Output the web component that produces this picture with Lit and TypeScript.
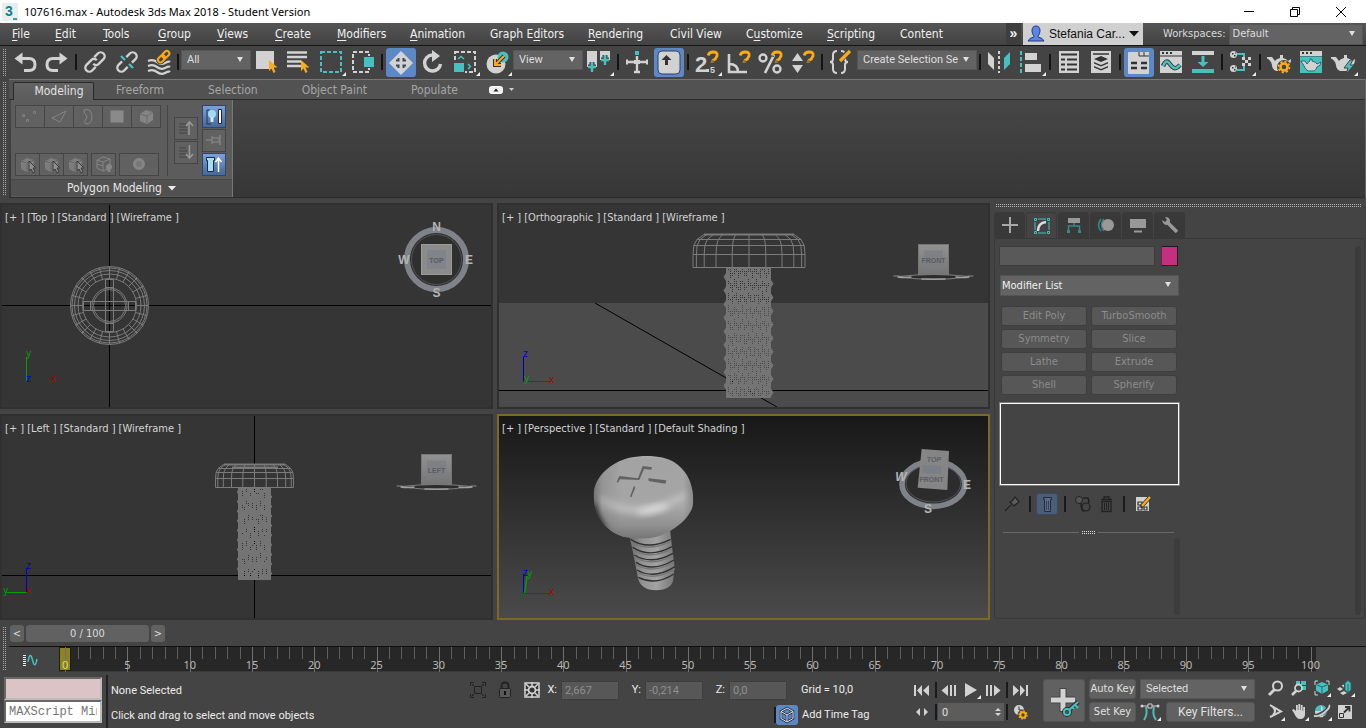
import { LitElement, html, svg, css } from "lit";
import { customElement } from "lit/decorators.js";
import { classMap } from "lit/directives/class-map.js";

const G = "#d2d2d2";
const T = "#47c0c0";
const O = "#fbab18";
const D = "#333333";

const ic = (w: number, h: number, body: unknown) =>
  html`<svg class="ic" width=${w} height=${h} viewBox="0 0 ${w} ${h}" aria-hidden="true">${body}</svg>`;

const magnet = svg`<path d="M17 8q1-4 5-4 5 0 4 4-1 3-4 4.500-1 .5-1 2" fill="none" stroke=${O} stroke-width="2.800"/><path d="M15 7.500l4 1M19 13h4" stroke="#444" stroke-width="1"/>`;
const plus = (x: number, y: number) => svg`<path d="M${x - 4} ${y}h8M${x} ${y - 5}v10" stroke=${T} stroke-width="2.4"/>`;
const teapot = svg`<path d="M4 9h5l3 4q1-2 5-3V7h3v3q4 1 5 3l3-2q0 6-4 7-1 4-4 5h-7q-4-2-4-6Q8 12 4 10.500z" fill=${G}/>`;
const winTop = svg`<path d="M5 3h22v5H5z" fill=${G}/><path d="M7 4h2v2H7zM11 4h2v2h-2zM15 4h2v2h-2z" fill=${D}/>`;
const dashBox = (x: number, y: number, w: number, h: number, c: string) =>
  svg`<rect x=${x} y=${y} width=${w} height=${h} fill="none" stroke=${c} stroke-width="2" stroke-dasharray="4 2"/>`;
const cursor = (x: number, y: number) => svg`<path transform="translate(${x} ${y})" d="M0 0v11l2.500-2.500 2 4.500 2-1-2-4.500h4z" fill=${O}/>`;

const icons: Record<string, unknown> = {
  undo: svg`<path d="M11 10.500h9q6 0 6 6t-6 6h-5" fill="none" stroke=${G} stroke-width="3"/><path d="M5.500 10.500l8-6v12z" fill=${G}/>`,
  redo: svg`<path d="M21 10.500h-9q-6 0-6 6t6 6h5" fill="none" stroke=${G} stroke-width="3"/><path d="M26.500 10.500l-8-6v12z" fill=${G}/>`,
  link: svg`<g transform="rotate(-45 16 14)" fill="none" stroke=${G} stroke-width="2.400"><path d="M13 18H8a4 4 0 0 1 0-8h7a4 4 0 0 1 3.500 4"/><path d="M19 10h5a4 4 0 0 1 0 8h-7a4 4 0 0 1-3.500-4"/></g>`,
  unlink: svg`<g transform="rotate(-45 16 14)" fill="none" stroke=${G} stroke-width="2.400"><path d="M13 18H8a4 4 0 0 1 0-8h5M19 10h5a4 4 0 0 1 0 8h-5"/></g><path d="M10 8l12 12M10 8l3 3M19 17l3 3" stroke=${T} stroke-width="2.400"/><path d="M14 12l4 4" stroke="#444" stroke-width="4"/>`,
  bind: svg`<path d="M5 13q5-2 9 1t8 1 5-1M5 18q5-2 9 1t8 1 5-1M5 23q5-2 9 1t8 1 5-1" fill="none" stroke=${G} stroke-width="2.200"/><g transform="rotate(-45 21 9)" fill="none" stroke="#444" stroke-width="4"><rect x="14" y="6" width="8" height="5" rx="2.500"/><rect x="20" y="6" width="8" height="5" rx="2.500"/></g><g transform="rotate(-45 21 9)" fill="none" stroke=${O} stroke-width="2"><rect x="14" y="6" width="8" height="5" rx="2.500"/><rect x="20" y="6" width="8" height="5" rx="2.500"/></g>`,
  select: svg`<path d="M5 3h18v18H5z" fill=${G}/>${cursor(18, 12)}`,
  byname: svg`<path d="M4 4.500h20M4 9h20M4 13.500h14M4 18h14" stroke=${G} stroke-width="2.600"/>${cursor(18, 12)}`,
  rect: dashBox(6, 4, 20, 20, T),
  window: svg`${dashBox(6, 4, 16, 20, G)}<path d="M16 8h12v12H16z" fill="#444"/><path d="M17 9h10v10H17z" fill=${T}/>`,
  move: svg`<path d="M16 3l12 12-12 12L4 15z" fill=${G}/><path d="M11 12.500h2.500V10M18.500 10v2.500H21M11 17.500h2.500V20M18.500 20v-2.500H21" fill="none" stroke="#3b4657" stroke-width="2"/>`,
  rotate: svg`<path d="M15 7a8 8 0 1 0 8.500 9" fill="none" stroke=${G} stroke-width="3.400"/><path d="M15 2l8 6-8 6z" fill=${G}/>`,
  scale: svg`${dashBox(6, 4, 20, 20, G)}<path d="M4 14h12v12H4z" fill="#444"/><path d="M5 15h10v9H5z" fill=${T}/><path d="M9 11l3-2.500 3 2.500M19 16l2.500 2.500L19 21" fill="none" stroke=${T} stroke-width="1.500"/>`,
  place: svg`<circle cx="15" cy="16" r="9.500" fill=${G}/><circle cx="22" cy="9" r="5.500" fill=${T}/><path d="M23 8l-8 8M14 11v6h6" fill="none" stroke=${D} stroke-width="4"/><path d="M23 8l-8 8M14 11v6h6" fill="none" stroke=${O} stroke-width="2"/>`,
  pivot: svg`<path d="M4 3h10v16H4zM17 3h10v9H17z" fill=${G}/><path d="M5 19h8M9 14v10M18 12h8M22 7v10" stroke="#444" stroke-width="5"/>${plus(9, 19)}${plus(22, 12)}`,
  manip: svg`<path d="M16 8v17M5 14h22M13 24h6" stroke=${G} stroke-width="2.400"/><path d="M14 3h4v4h-4z" fill=${T}/><path d="M5 11.500h2v5H5zM25 11.500h2v5h-2zM13 12h6v4h-6z" fill=${G}/>`,
  keyb: svg`<rect x="5" y="3" width="22" height="23" rx="4" fill=${G} stroke="#35425a"/><path d="M13.500 7l5 5h-3.500v5h-3v-5H8.500z" fill=${D}/>`,
  snap: svg`<text x="4" y="24" class="big" fill=${G}>2</text><path d="M15 21h3v3h-3z" fill=${G}/><text x="19" y="25" class="small" fill=${G}>5</text>${magnet}`,
  angle: svg`<path d="M6 6v18h18M6 16q9 0 9 8" fill="none" stroke=${G} stroke-width="2.600"/>${magnet}`,
  percent: svg`<circle cx="8" cy="10" r="3.500" fill="none" stroke=${G} stroke-width="2.400"/><circle cx="22" cy="21" r="3.500" fill="none" stroke=${G} stroke-width="2.400"/><path d="M19 7L10 25" stroke=${G} stroke-width="2.600"/>${magnet}`,
  spin: svg`<path d="M5 13l5.500-8 5.500 8zM5 17l5.500 8 5.500-8z" fill=${G}/>${magnet}`,
  sets: svg`<path d="M12 3q-4 0-4 4v4q0 3-3 3 3 0 3 3v4q0 4 4 4M16 3q4 0 4 4v4q0 3 3 3-3 0-3 3v4q0 4-4 4" fill="none" stroke=${G} stroke-width="2"/><path d="M14 14l10-11" stroke="#444" stroke-width="5"/><path d="M15 13l10-10" stroke=${O} stroke-width="3.200"/>`,
  mirror: svg`<path d="M5 4l6 6v12l-6-6z" fill=${G}/><path d="M16 3v22" stroke=${G} stroke-width="2" stroke-dasharray="3 2"/><path d="M27 4l-6 6v12l6-6z" fill=${T}/>`,
  align: svg`<path d="M6 3v22" stroke=${T} stroke-width="2" stroke-dasharray="4 2"/><path d="M10 5h12v7H10zM10 16h16v8H10z" fill=${G}/>`,
  layers: svg`<path d="M6 3h20v22H6z" fill=${G}/><path d="M8 6.500h16M8 11.500h4M14 11.500h10M8 16.500h4M14 16.500h10M8 21.500h4M14 21.500h10" stroke=${D} stroke-width="2"/>`,
  layers2: svg`<path d="M6 3h20v22H6z" fill=${G}/><path d="M8 6h16" stroke=${D} stroke-width="1.500"/><path d="M16 8l7 3-7 3-7-3zM9 14l7 3 7-3v1.500l-7 3-7-3zM9 18l7 3 7-3v1.500l-7 3-7-3z" fill=${D}/>`,
  ribbon: svg`<path d="M5 5q0-1 1-1h20v21q0 1-1 1H6q-1 0-1-1z" fill=${G}/><path d="M16 4v4h10M21 4v4" fill="none" stroke=${D}/><path d="M8 15h6M18 15h6M8 20h6M18 20h6" stroke=${D} stroke-width="2.600"/>`,
  curve: svg`<path d="M5 3h22v22H5z" fill=${G}/>${winTop}<path d="M5 8h22" stroke=${D}/><path d="M8 18q3-7 6-3t5 5 6-3" fill="none" stroke=${D} stroke-width="4.500"/><path d="M8 18q3-7 6-3t5 5 6-3" fill="none" stroke=${T} stroke-width="2.600"/>`,
  dope: svg`<path d="M5 3h22v4H5z" fill=${G}/><path d="M5 21h22v4H5z" fill=${T}/><path d="M14.500 8h3v6h4L16 19l-5.500-5h4z" fill=${T}/>`,
  mat: svg`<path d="M12 6h7v5M12 22h7v-4" fill="none" stroke=${T} stroke-width="2"/><circle cx="8.500" cy="6.500" r="3.500" fill=${G}/><circle cx="8.500" cy="20.500" r="3.500" fill=${G}/><path d="M7 5h1.500v1.500H7zM9 7h1.500v1.500H9zM10 4.500h1v1h-1zM7 19h1.500v1.500H7zM9 21h1.500v1.500H9zM10 18.500h1v1h-1z" fill=${D}/><path d="M17 9h3v3h-3zM23 9h3v3h-3zM20 12h3v3h-3zM17 15h3v3h-3zM23 15h3v3h-3z" fill=${G}/>`,
  rsetup: svg`${teapot}<circle cx="21" cy="19" r="7" fill="#444"/><circle cx="21" cy="19" r="3.500" fill="none" stroke=${O} stroke-width="2.600"/><circle cx="21" cy="19" r="5.400" fill="none" stroke=${O} stroke-width="1.800" stroke-dasharray="2.200 2"/>`,
  rframe: svg`${winTop}<path d="M5 8.500h22V25H5z" fill=${T}/><path d="M6 13h4l2 3q1-2 3-3v-2h2v2q4 1 5 3l4-2q0 4-4 5-1 3-3 4h-6q-3-2-4-5-1-3-3-4z" fill=${G} stroke="#2b6d6e"/>`,
  render: svg`${teapot}<path d="M23 12l-6 8h4l-2 6 8-9h-4l3-5z" fill=${T} stroke="#444"/>`,
};

type Tool = [string, string, boolean?, boolean?];
const bar: (Tool | "|" | { label: string; value: string; cls: string })[] = [
  ["undo", "Undo"], ["redo", "Redo"], "|",
  ["link", "Select and Link"], ["unlink", "Unlink Selection"], ["bind", "Bind to Space Warp"], "|",
  { label: "Selection filter", value: "All", cls: "w70" },
  ["select", "Select Object"], ["byname", "Select by Name"], ["rect", "Rectangular Region", false, true], ["window", "Window/Crossing"], "|",
  ["move", "Select and Move", true], ["rotate", "Select and Rotate"], ["scale", "Select and Scale", false, true], ["place", "Select and Place", false, true],
  { label: "Reference coordinate system", value: "View", cls: "w70" },
  ["pivot", "Use Pivot Point Center", false, true], "|",
  ["manip", "Select and Manipulate"], ["keyb", "Keyboard Shortcut Override", true], "|",
  ["snap", "Snaps Toggle", false, true], ["angle", "Angle Snap"], ["percent", "Percent Snap"], ["spin", "Spinner Snap"], "|",
  ["sets", "Edit Named Selection Sets"],
  { label: "Named selection sets", value: "Create Selection Se", cls: "w120" }, "|",
  ["mirror", "Mirror"], ["align", "Align", false, true], "|",
  ["layers", "Scene Explorer"], ["layers2", "Layer Explorer"], "|",
  ["ribbon", "Toggle Ribbon", true], ["curve", "Curve Editor"], ["dope", "Schematic View"], "|",
  ["mat", "Material Editor", false, true], "|",
  ["rsetup", "Render Setup"], ["rframe", "Rendered Frame Window"], ["render", "Render Production", false, true],
];

const menus: [string, number][] = [
  ["File", 0], ["Edit", 0], ["Tools", 0], ["Group", 0], ["Views", 0], ["Create", 0], ["Modifiers", 0], ["Animation", 0],
  ["Graph Editors", 7], ["Rendering", 0], ["Civil View", -1], ["Customize", 1], ["Scripting", 0], ["Content", -1],
];

const head = (cx: number, hw: number, ys: number[], fs: number[]) => {
  const k = [1, 1, 0.985, 0.93, 0.8];
  const rows = ys.map((y, i) => `M${cx - hw * k[i]} ${y}H${cx + hw * k[i]}`).join("");
  const cols = fs
    .flatMap((f) => (f ? [-f, f] : [0]))
    .map((f) => "M" + ys.map((y, i) => `${(cx + hw * f * k[i]).toFixed(1)} ${y}`).join("L"))
    .join("");
  return svg`<path d=${rows + cols} fill="none" stroke="#7b7b7b"/>`;
};

const shank = (x: number, y: number, w: number, h: number, edge: number, density: number) => {
  let d = `M${x} ${y}h${w}v${h}h${-w}z`;
  for (let j = 1; j < h - 1; j += 2) {
    for (let i = edge; i < w - edge; i += 2) {
      const wave = Math.sin(j * 0.47 + Math.sin(i * 0.9) * 1.4) + Math.sin(i * 1.7 + j * 0.13) * 0.7;
      if (wave > density) d += `M${x + i} ${y + j}h1v1h-1z`;
    }
  }
  return svg`<path d=${d} fill="#747474" fill-rule="evenodd"/>`;
};

const bumps = (xl: number, xr: number, y0: number, y1: number, step: number, r: number) => {
  let d = "";
  for (let y = y0; y < y1; y += step) d += `M${xl} ${y - r * 1.6}l${-r} ${r * 1.6}l${r} ${r * 1.6}zM${xr} ${y + step / 2 - r * 1.6}l${r} ${r * 1.6}l${-r} ${r * 1.6}z`;
  return svg`<path d=${d} fill="#747474"/>`;
};

const topScrew = () => {
  const cx = 109.5, cy = 305.5;
  let d = "";
  for (let a = 0; a < 24; a++) {
    const t = (a * Math.PI) / 12;
    d += `M${(cx + 27 * Math.cos(t)).toFixed(1)} ${(cy + 27 * Math.sin(t)).toFixed(1)}L${(cx + 39 * Math.cos(t)).toFixed(1)} ${(cy + 39 * Math.sin(t)).toFixed(1)}`;
  }
  return svg`<g fill="none" stroke="#7b7b7b">
    ${[39, 37.5, 35, 31.5, 27, 17.5, 16].map((r) => svg`<circle cx=${cx} cy=${cy} r=${r}/>`)}
    <path d=${d}/>
    <path d="M105.500 279V332M113.500 279V332M105.500 279.500h8M105.500 331.500h8M105.500 287.500h8M105.500 323.500h8M83 301.500H136M83 310.500H136M83.500 301.500v9M135.500 301.500v9M90.500 301.500v9M128.500 301.500v9"/>
  </g>`;
};

const flatCube = (x: number, label: string, y: number) => svg`
  <path d="M${x - 40} ${y + 31.500}h6M${x + 34} ${y + 31.500}h6" stroke="#8a8a8a"/>
  <path d="M${x - 35} ${y + 32}Q${x} ${y + 28} ${x + 35} ${y + 32}Q${x} ${y + 38} ${x - 35} ${y + 32}z" fill="#2b2b2b" stroke="#7c7e80"/>
  <path d="M${x - 36} ${y + 32.500}q8 1 14 0M${x + 36} ${y + 32.500}q-8 1-14 0" fill="none" stroke="#a0a0a0" stroke-width="1.500"/>
  <path d="M${x - 12} ${y + 34.500}h24" stroke="#c4c4c4"/>
  <rect x=${x - 15} y=${y} width="30" height="30" fill="url(#cube)" stroke="#777"/>
  <rect x=${x - 9.500} y=${y + 6} width="19" height="18" fill="#7b7d82" opacity=".7"/>
  <text x=${x} y=${y + 18} class="face">${label}</text>`;

const defs = svg`<defs>
  <linearGradient id="cube" x1="0" y1="0" x2="0" y2="1"><stop offset="0" stop-color="#929292"/><stop offset="1" stop-color="#757575"/></linearGradient>
  <linearGradient id="hd" x1="0" y1="0" x2="0" y2="1"><stop offset="0" stop-color="#b2b2b2"/><stop offset=".08" stop-color="#a3a3a3"/><stop offset=".6" stop-color="#a6a6a6"/><stop offset=".8" stop-color="#909090"/><stop offset="1" stop-color="#6c6c6c"/></linearGradient>
  <linearGradient id="hs" x1="0" y1="0" x2="1" y2="0"><stop offset="0" stop-color="#000" stop-opacity=".4"/><stop offset=".12" stop-color="#000" stop-opacity=".1"/><stop offset=".3" stop-color="#000" stop-opacity="0"/><stop offset=".88" stop-color="#000" stop-opacity="0"/><stop offset="1" stop-color="#000" stop-opacity=".2"/></linearGradient>
  <linearGradient id="sk" x1="0" y1="0" x2="1" y2="0"><stop offset="0" stop-color="#6e6e6e"/><stop offset=".3" stop-color="#959595"/><stop offset=".6" stop-color="#a2a2a2"/><stop offset="1" stop-color="#767676"/></linearGradient>
  <filter id="soft" x="-30%" y="-60%" width="160%" height="220%"><feGaussianBlur stdDeviation="9"/></filter>
  <clipPath id="headclip"><path d="M293 255C293 200 345 157 400 143C455 133 505 138 535 157C570 180 583 212 587 232C593 255 594 285 586 300C570 332 545 350 515 367C480 388 430 390 380 380C330 364 293 320 293 255z"/></clipPath>
</defs>`;

const scenes: Record<string, unknown> = {
  top: svg`<path d="M109.500 205V407M2 305.500H491" stroke="#000"/>${topScrew()}
    <circle cx="436.500" cy="259.500" r="29.500" fill="#2f2f2f" stroke="#7f8389" stroke-width="6"/><circle cx="436.500" cy="259.500" r="25" fill="none" stroke="#50545a"/>
    <rect x="421.500" y="244.500" width="30" height="30" fill="#8b8b8b" stroke="#9a9a9a"/><rect x="427" y="250" width="19" height="19" fill="#808389"/>
    <text x="436.500" y="263" class="face">TOP</text>
    <text x="436.500" y="231" class="dir">N</text><text x="436.500" y="297" class="dir">S</text><text x="404" y="264" class="dir">W</text><text x="469" y="264" class="dir">E</text>
    <path d="M26.500 357v24.500" stroke="#00a000"/><path d="M31 381.500h22" stroke="#b40000"/>
    <text x="26" y="357" class="ax g">y</text><text x="26" y="382" class="ax b">z</text><text x="51" y="382" class="ax r">x</text>`,
  ortho: svg`<path d="M499 303h489v104H499z" fill="#4b4b4b"/><path d="M595 303L777 407M499 390.500H988" stroke="#000"/>
    ${shank(726, 268, 45, 130, 2, 0.1)}${bumps(726, 771, 277, 392, 13.6, 2.5)}
    ${head(749, 56, [267.5, 254.5, 245.5, 239.5, 234.5], [0, 0.3, 0.59, 0.8, 0.94, 1])}<path d="M704 234.500h90" stroke="#7b7b7b" stroke-width="2"/>
    ${flatCube(933.5, "FRONT", 244.5)}
    <path d="M523.500 357v24.500" stroke="#0000b0"/><path d="M528 381.500h22" stroke="#b40000"/>
    <text x="523" y="357" class="ax b">z</text><text x="524" y="382" class="ax g">y</text><text x="549" y="383" class="ax r">x</text>`,
  left: svg`<path d="M254.500 416V618M2 575.500H491" stroke="#000"/>
    ${shank(238, 488, 33, 92, 4, 0.75)}${bumps(238, 271, 492, 572, 9.6, 1.2)}
    ${head(254.5, 39, [487.5, 478.5, 472.5, 468.5, 464.5], [0, 0.3, 0.59, 0.8, 0.94, 1])}<path d="M224 464.500h61M232 467.500h46" stroke="#7b7b7b" stroke-width="2"/>
    ${flatCube(436.5, "LEFT", 454.5)}
    <path d="M26.500 568v24.500" stroke="#0000d0"/><path d="M7 592.500h20" stroke="#00a000"/>
    <text x="26" y="569" class="ax b">z</text><text x="3" y="594" class="ax g">y</text><text x="26" y="594" class="ax r">x</text>`,
  persp: svg`<g transform="translate(496 410) scale(.33333)">
    <path d="M402 375L522 355Q526 400 536 470L532 508Q528 540 480 541Q434 540 426 505Q418 460 402 385z" fill="url(#sk)"/>
    <path d="M404 388Q455 422 524 388M410 412Q462 446 528 410M415 435Q466 466 531 430M420 457Q470 488 534 450M423 480Q474 510 537 470M427 502Q478 528 534 492" fill="none" stroke="#303030" stroke-width="4"/>
    <path d="M404 394Q455 428 524 394M410 418Q462 452 528 416M415 441Q466 472 531 436M420 463Q470 494 534 456M423 486Q474 516 537 476" fill="none" stroke="#777" stroke-width="4"/>
    <g clip-path="url(#headclip)">
      <path d="M280 130H600V400H280z" fill="url(#hd)"/>
      <path d="M310 265Q420 340 570 255" fill="none" stroke="#bdbdbd" stroke-width="22" filter="url(#soft)"/>
      <ellipse cx="470" cy="298" rx="50" ry="10" transform="rotate(-12 470 298)" fill="#dcdcdc" filter="url(#soft)"/>
      <path d="M280 130H600V400H280z" fill="url(#hs)"/>
      <path d="M292 270Q305 325 335 362Q290 350 285 300z" fill="#000" filter="url(#soft)"/>
    </g>
    <path d="M440 168L468 172L466 179L444 177L430 210L372 208L366 218L362 216L370 198L426 205zM457 205L511 211L508 221L458 213zM414 227L418 233L406 262L402 260z" fill="#626262"/>
    <ellipse cx="1312" cy="222" rx="94" ry="67" fill="#2c2c2c" stroke="#7f8389" stroke-width="17"/><ellipse cx="1312" cy="220" rx="82" ry="56" fill="none" stroke="#50545a" stroke-width="3"/>
    <path d="M1277 117L1359 123L1354 240L1265 233z" fill="#858585"/><path d="M1280 165L1336 168L1334 192L1279 188z" fill="#7a7e87"/></g>
    <text x="934" y="462" class="face it">TOP</text><text x="931.500" y="482" class="face">FRONT</text>
    <text x="901" y="481" class="dir it">W</text><text x="967" y="489" class="dir">E</text><text x="928" y="513" class="dir">S</text>
    <path d="M523.500 574v19" stroke="#0000d0"/><path d="M524.500 593L527 576" stroke="#00a000" stroke-width="1.500"/><path d="M524 593.500h26" stroke="#b40000"/>
    <text x="523" y="576" class="ax b">z</text><text x="527" y="577" class="ax g">y</text><text x="549" y="595" class="ax r">x</text>`,
};

const views: { id: string; box: string; tags: string[] }[] = [
  { id: "top", box: "2 205 489 202", tags: ["+", "Top ", "Standard ", "Wireframe "] },
  { id: "ortho", box: "499 205 489 202", tags: ["+", "Orthographic ", "Standard ", "Wireframe "] },
  { id: "left", box: "2 416 489 202", tags: ["+", "Left ", "Standard ", "Wireframe "] },
  { id: "persp", box: "499 416 489 202", tags: ["+", "Perspective ", "Standard ", "Default Shading "] },
];

const box3 = svg`<path d="M4 7l6-3 7 2v8l-7 4-6-3z" fill="#7d7d7d"/><path d="M4 7l6 2 7-3M10 9v8" fill="none" stroke="#666"/>`;
const arrowCur = svg`<path d="M12 7v10l2-2 2 4 2-1-2-4h3z" fill="#8f8f8f" stroke="#3a3a3a"/>`;

@customElement("app-root")
export class AppRoot extends LitElement {
  static styles = css`
    :host { display: grid; grid-template-rows: 23px 23px 33px 119px minmax(0, 1fr) 108px; height: 100vh; overflow: hidden; background: #444; color: #e6e6e6; font: 11px/14px "DejaVu Sans Condensed", "Noto Sans", sans-serif; }
    * { box-sizing: border-box; }
    button, input, select { font: inherit; color: inherit; margin: 0; padding: 0; border: 0; background: none; border-radius: 0; outline: 0; }
    button { display: flex; align-items: center; justify-content: center; flex: none; white-space: nowrap; }
    a { color: inherit; text-decoration: none; }
    svg { display: block; flex: none; }
    .grip { width: 3px; margin-left: 3px; background: linear-gradient(transparent 50%, #444 50%) 0 0 / 2px 2px, linear-gradient(90deg, #a8a8a8 50%, transparent 50%) 0 0 / 2px 2px; }
    .sep { width: 2px; background: #1a1a1a; flex: none; }

    .title { display: flex; align-items: center; background: #fff; color: #000; font: 11px/22px "Noto Sans", sans-serif; padding: 0 5px 0 2px; gap: 5px; }
    .title h1 { font: inherit; margin: 0; flex: 1; }
    .title button { width: 41px; height: 22px; }

    .menubar { display: flex; border-bottom: 1px solid #151515; background: linear-gradient(#555, #424242); }
    .menus { display: grid; grid-template-columns: 43px 48px 55px 59px 58px 62px 73px 80px 98px 82px 76px 81px 73px 1fr; flex: 1; padding-left: 12px; font-size: 12px; line-height: 22px; color: #f0f0f0; }
    .menus a { white-space: pre; }
    .menus u { text-underline-offset: 2px; }
    .more { width: 15px; margin-right: 2px; background: #3e3e3e; font: bold 14px/18px "Liberation Sans", sans-serif; color: #eee; padding-bottom: 3px; }
    .user { width: 120px; background: #d0d0d0; color: #111; font: 12px/22px "Liberation Sans", sans-serif; gap: 4px; }
    .ws { display: flex; align-items: center; width: 223px; padding: 0 3px 0 20px; gap: 3px; color: #d8d8d8; }
    .ws .drop { flex: 1; height: 21px; }
    .ws .drop select { padding-left: 3px; }

    .drop { position: relative; display: block; height: 20px; background: #636363; border: 1px solid #555; color: #dedede; flex: none; }
    .drop select { appearance: none; width: 100%; height: 100%; padding: 0 4px 0 5px; display: block; }
    .drop::after { content: ""; position: absolute; right: 7px; top: 6px; border: 3px solid transparent; border-top: 5px solid #e0e0e0; border-bottom: 0; pointer-events: none; }
    .w70 { width: 70px; }
    .w120 { width: 120px; }

    .toolbar { display: flex; align-items: flex-start; padding-top: 2px; overflow: hidden; }
    .toolbar .grip { height: 27px; margin-right: 3px; margin-top: 1px; flex: none; }
    .toolbar .drop { margin-top: 2px; font-family: Roboto, sans-serif; }
    .tool { width: 32px; height: 29px; position: relative; }
    .tool.on::before { content: ""; position: absolute; inset: 0 1px; background: #5c88c5; border-radius: 3px; }
    .tool svg { position: relative; }
    .sep6 { width: 6px; height: 16px; margin-top: 6px; border-left: 2px solid #444; border-right: 2px solid #444; background: #141414; flex: none; }
    .big { font: bold 22px "Liberation Sans", sans-serif; }
    .small { font: bold 9px "Liberation Sans", sans-serif; }

    .ribbon { display: grid; grid-template-columns: 9px 1fr; background: #444; }
    .ribbon .grip { margin-top: 3px; margin-bottom: 2px; }
    .rib { border-top: 1px solid #777; border-right: 1px solid #666; display: flex; flex-direction: column; }
    .tabs { display: flex; align-items: flex-end; height: 20px; background: #525252; border-bottom: 1px solid #2a2a2a; padding-left: 4px; color: #a6a6a6; font-size: 12px; line-height: 17px; }
    .tabs button { height: 18px; padding: 0 22px; }
    .tabs .act { color: #e2e2e2; width: 81px; height: 18px; padding: 0 9px 1px 20px; background: linear-gradient(#646464, #5c5c5c); border: 1px solid #2a2a2a; border-bottom: 0; margin-bottom: -1px; border-radius: 2px 2px 0 0; }
    .tabs .mini { padding: 0 7px 1px 9px; gap: 6px; }
    .body { flex: 1; display: flex; background: linear-gradient(#464646, #373737); border-bottom: 1px solid #2b2b2b; padding-left: 2px; }
    .panel { width: 222px; background: #5c5c5c; border-right: 1px solid #777; display: flex; flex-direction: column; justify-content: space-between; }
    .pbody { display: flex; padding: 5px 6px 0 4px; }
    .pleft { width: 153px; height: 71px; display: flex; flex-direction: column; justify-content: space-between; border-right: 1px solid #454545; }
    .row { display: flex; }
    .rb { border: 1px solid #454545; height: 23px; background: #616161; margin-right: -1px; }
    .r29 { width: 30px; }
    .r24 { width: 25px; }
    .r40 { width: 40px; }
    .gap5 { margin-left: 4px; }
    .col { display: flex; flex-direction: column; gap: 1px; margin-left: 6px; }
    .col + .col { margin-left: 4px; }
    .col .rb { width: 24px; margin: 0; }
    .mid { justify-content: center; }
    .rb.blue { background: linear-gradient(#7ba1da, #48679a); border-color: #2f4569; }
    .ptitle { background: #515151; border-top: 1px solid #484848; height: 17px; text-align: center; font-size: 12px; line-height: 15px; gap: 6px; width: 100%; margin-bottom: 1px; }

    .main { display: grid; grid-template-columns: minmax(0, 1fr) minmax(0, 1fr) 372px; column-gap: 4px; padding-top: 5px; }
    .views { display: grid; grid-column: 1 / 3; grid-template: 1fr 1fr / 1fr 1fr; gap: 5px 4px; min-height: 0; }
    .view { position: relative; border: 2px solid #303030; background: #353535; min-width: 0; min-height: 0; overflow: hidden; }
    .view.persp { border-color: #7d6829; background: linear-gradient(#181818, #4a4a4a); }
    .view > svg { width: 100%; height: 100%; }
    .labels { position: absolute; left: 3px; top: 6px; display: flex; gap: 3px; color: #d4d4d4; }
    .labels button { white-space: pre; }
    .face { font: bold 7px "Liberation Sans", sans-serif; fill: #5a5d63; text-anchor: middle; }
    .dir { font: bold 12px "Liberation Sans", sans-serif; fill: #b4b4b4; text-anchor: middle; }
    .it { font-style: italic; }
    .ax { font: 10px "DejaVu Sans Condensed", sans-serif; }
    .g { fill: #00a000; }
    .b { fill: #0000d8; }
    .r { fill: #b40000; }

    .cmd { display: flex; flex-direction: column; padding-top: 1px; }
    .hgrip { height: 3px; margin: 0 4px 5px 2px; background: linear-gradient(transparent 50%, #444 50%) 0 0 / 2px 2px, linear-gradient(90deg, #b4b4b4 50%, transparent 50%) 0 0 / 2px 2px; }
    .ctabs { display: flex; gap: 1px; }
    .ctabs button { width: 31px; height: 26px; background: #393939; border-radius: 4px 4px 0 0; }
    .ctabs .act { background: #444; border: 1px solid #3a3a3a; border-bottom: 0; height: 27px; margin-bottom: -1px; }
    .cbox { flex: 1; display: flex; border: 1px solid #393939; border-radius: 3px; padding: 7px 3px 3px 4px; justify-content: space-between; margin-bottom: 1px; margin-right: 1px; }
    .inner { width: 181px; display: flex; flex-direction: column; }
    .name { display: flex; gap: 6px; }
    .name input { width: 156px; height: 20px; background: #595959; border: 1px solid #3d3d3d; padding: 0 4px; }
    .swatch { width: 17px; height: 20px; background: #c4307f; border: 1px solid #1a1a1a; border-left-color: #6b2a4c; }
    .inner .drop { margin: 9px 1px 0; height: 21px; }
    .inner .drop select { padding-left: 1px; color: #f0f0f0; }
    .mods { display: grid; grid-template-columns: 86px 86px; gap: 3px 4px; margin: 10px 0 7px 2px; }
    .mods button { height: 20px; background: #575757; border: 1px solid #3f3f3f; border-radius: 3px; color: #8c8c8c; }
    .stack { height: 84px; border: 2px solid #fff; outline: 1px solid #7c7c7c; outline-offset: -1px; }
    .stools { display: flex; align-items: center; height: 36px; padding-left: 2px; }
    .stools button { width: 22px; height: 22px; }
    .stools .on { background: #4b5d79; border-radius: 3px; border: 1px solid #3a4a62; margin: 0 0 0 5px; }
    .stools .sep { height: 16px; margin-left: 6px; }
    .stools .uniq { margin-left: 5px; }
    .stools .trash { margin-left: 2px; }
    .stools .conf { margin-left: 6px; }
    .split { display: flex; align-items: center; gap: 3px; margin: 9px 6px 4px 4px; }
    .split i { flex: 1; height: 1px; background: #6a6a6a; }
    .split b { width: 13px; height: 3px; background: linear-gradient(transparent 50%, #444 50%) 0 0 / 2px 2px, linear-gradient(90deg, #e0e0e0 50%, transparent 50%) 0 0 / 2px 2px; }
    .sb { width: 6px; background: #3c3c3c; border-radius: 3px; }
    .in2 { flex: 1; display: flex; justify-content: flex-end; }

    .foot { display: grid; grid-template-rows: 52px 1fr; }
    .time { display: grid; grid-template-columns: 9px 1fr; }
    .time .grip { margin-top: 7px; margin-bottom: 2px; }
    .slider { display: flex; height: 26px; padding: 5px 0 0 1px; gap: 2px; border-bottom: 1px solid #444; }
    .slider button { height: 17px; width: 14px; background: #616161; border-radius: 3px; color: #dcdcdc; }
    .slider .thumb { width: 123px; }
    .trackrow { display: flex; height: 26px; border-top: 1px solid #101010; }
    .mini-curve { width: 42px; height: 25px; margin-right: 8px; }
    .track { flex: 1; display: flex; background: #272727; margin-right: 50px; border-bottom: 1px solid #3a3a3a; }
    .frame { flex: 1; min-width: 0; position: relative; display: flex; justify-content: center; align-items: flex-end; font: 11px/13px "Noto Sans", sans-serif; color: #b8b8b8; white-space: nowrap; }
    .frame::before { content: ""; position: absolute; top: 0; left: 50%; width: 1px; height: 12px; background: #5e5e5e; }
    .frame.five::before { height: 25px; background: #707070; }
    .frame span { position: relative; flex: none; }
    .frame.now { background: #8b8420; color: #e2dc50; outline: 1px solid #1c1c10; outline-offset: -1px; }

    .status { display: flex; color: #ececec; font-family: Roboto, sans-serif; }
    .listen { width: 98px; margin-left: 4px; padding-top: 5px; }
    .listen input { display: block; width: 98px; height: 23px; border: 2px inset #bbb; }
    .pink { background: #dcc3c5; }
    .mx { background: #fff; color: #777; font: 12px "Liberation Mono", monospace; padding: 0 3px; }
    .vsep { width: 2px; margin: 3px 3px 2px 4px; background: #222; }
    .msg { flex: 1; padding-top: 8px; line-height: 22px; }
    .msg p { margin: 0 0 3px; }
    .coord { width: 446px; padding-top: 7px; display: grid; grid-template-rows: 22px 20px; row-gap: 4px; align-items: center; }
    .coord .row { align-items: center; }
    .coord .row button { width: 27px; height: 22px; }
    .coord label { display: flex; align-items: center; width: 84px; gap: 4px; }
    .coord label span { width: 12px; text-align: right; white-space: nowrap; }
    .coord input { width: 58px; height: 19px; background: #575757; border: 1px solid #3e3e3e; color: #8f8f8f; padding: 0 3px; }
    .coord .grid-size { margin-left: 4px; }
    .tag { padding-left: 310px; gap: 4px; }
    .coord .tag button { width: 22px; height: 20px; background: #5c88c5; border-radius: 3px; }
    .tag .sep { height: 16px; margin-right: -4px; }
    .play { width: 128px; padding: 7px 0 0 1px; display: grid; grid-template-rows: 21px 20px; row-gap: 2px; }
    .play .row { align-items: center; }
    .play button { width: 22px; height: 20px; }
    .play .sep { height: 16px; margin: 0 1px 0 2px; }
    .play input { width: 66px; height: 18px; background: #5c5c5c; color: #e0e0e0; padding: 0 4px; display: block; }
    .spinbox { position: relative; display: block; }
    .spinbox svg { position: absolute; right: 3px; top: 4px; }
    .keys { display: grid; grid-template-columns: 42px 47px 115px; column-gap: 4px; padding: 7px 6px 0 5px; align-items: start; }
    .keys button { background: #616161; border-radius: 3px; height: 20px; border: 1px solid #555; color: #e0e0e0; }
    .keys .bigkey { height: 43px; }
    .stackc { display: flex; flex-direction: column; gap: 3px; }
    .stackc > button { font-family: "DejaVu Sans Condensed", sans-serif; }
    .keys .bare { width: 26px; background: none; border: 0; justify-content: flex-start; }
    .keys .kf { flex: 1; font-size: 12px; }
    .nav { display: grid; grid-template-columns: repeat(4, 23px); grid-template-rows: 23px 22px; width: 105px; padding: 6px 0 0 3px; }
    .nav button { height: 22px; }
  `;

  private drop(label: string, value: string, cls = "") {
    return html`<label class="drop ${cls}"><select aria-label=${label}><option>${value}</option></select></label>`;
  }

  private tool(item: (typeof bar)[number]) {
    if (item === "|") return html`<span class="sep6"></span>`;
    if (!Array.isArray(item)) return this.drop(item.label, item.value, item.cls);
    const [id, label, on, corner] = item;
    return html`<button class=${classMap({ tool: true, on: !!on })} aria-label=${label}>
      ${ic(32, 29, svg`${icons[id]}${corner ? svg`<path d="M31 24v4h-4z" fill="#eee"/>` : null}`)}
    </button>`;
  }

  private menu([text, k]: [string, number]) {
    return html`<a href="#">${k < 0 ? text : html`${text.slice(0, k)}<u>${text[k]}</u>${text.slice(k + 1)}`}</a>`;
  }

  render() {
    return html`
      <header class="title">
        ${ic(17, 18, svg`<rect width="16" height="18" fill="#e8eeee"/><text x="3" y="13" font-family="Liberation Sans" font-weight="bold" font-size="14" fill="#0b8389">3</text><path d="M11 15h4v2h-4z" fill="#2aa5aa"/>`)}
        <h1>107616.max - Autodesk 3ds Max 2018 - Student Version</h1>
        <button aria-label="Minimize">${ic(12, 12, svg`<path d="M1 5.500h10" stroke="#000"/>`)}</button>
        <button aria-label="Restore">${ic(12, 12, svg`<path d="M1.500 3.500h7v7h-7zM3.500 3.500v-2h7v7h-2" fill="none" stroke="#000"/>`)}</button>
        <button aria-label="Close">${ic(12, 12, svg`<path d="M1 1l10 10M11 1L1 11" stroke="#000"/>`)}</button>
      </header>

      <div class="menubar">
        <nav class="menus">${menus.map((m) => this.menu(m))}</nav>
        <button class="more" aria-label="More menus">»</button>
        <button class="user">
          ${ic(18, 18, svg`<path d="M9 1q4 0 4 5 0 3-2 5v1q5 1 6 4H1q1-3 6-4v-1Q5 9 5 6q0-5 4-5z" fill="#5b86e8" stroke="#223a7c"/>`)}
          <span>Stefania Car...</span>
          ${ic(10, 6, svg`<path d="M0 0h10L5 5.500z" fill="#111"/>`)}
        </button>
        <div class="ws"><span>Workspaces:</span>${this.drop("Workspace", "Default")}</div>
      </div>

      <div class="toolbar"><span class="grip"></span>${bar.map((b) => this.tool(b))}</div>

      <section class="ribbon">
        <span class="grip"></span>
        <div class="rib">
          <div class="tabs">
            <button class="act">Modeling</button><button>Freeform</button><button>Selection</button><button>Object Paint</button><button>Populate</button>
            <button class="mini" aria-label="Minimize ribbon">
              ${ic(14, 8, svg`<rect x=".5" y=".5" width="13" height="7" rx="2" fill="#eee" stroke="#fff"/><path d="M4.500 5.500h5L7 2.500z" fill="#222"/>`)}
              ${ic(6, 4, svg`<path d="M0 0h5L2.500 3z" fill="#ccc"/>`)}
            </button>
          </div>
          <div class="body">
            <div class="panel">
              <div class="pbody">
                <div class="pleft">
                  <div class="row">
                    <button class="rb r29" aria-label="Vertex">${ic(22, 21, svg`<path d="M3.500 8.500h2v2h-2zM7.500 13.500h2v2h-2zM14.500 5.500h2v2h-2z" fill="none" stroke="#808080"/>`)}</button>
                    <button class="rb r29" aria-label="Edge">${ic(22, 21, svg`<path d="M4 12l14-7-6 11z" fill="none" stroke="#858585"/>`)}</button>
                    <button class="rb r29" aria-label="Border">${ic(22, 21, svg`<path d="M7 4q8-2 8 7 0 7-6 7-3-2 0-5 2-2 0-4-3-3-2-5z" fill="none" stroke="#858585"/>`)}</button>
                    <button class="rb r29" aria-label="Polygon">${ic(22, 21, svg`<path d="M4.500 4.500h13v12h-13z" fill="#8a8a8a" stroke="#777"/>`)}</button>
                    <button class="rb r29" aria-label="Element">${ic(22, 21, svg`<path d="M5 8l6-4 7 2v8l-6 4-7-3z" fill="#858585"/><path d="M5 8l7 2 6-4M12 10v8" fill="none" stroke="#6c6c6c"/>`)}</button>
                  </div>
                  <div class="row">
                    ${["Preview off", "Preview subobject", "Preview multi"].map((n) => html`<button class="rb r24" aria-label=${n}>${ic(22, 21, svg`${box3}${arrowCur}`)}</button>`)}
                    <button class="rb r24 gap5" aria-label="Constraints">${ic(22, 21, svg`<path d="M4 6l6-3 7 2v9l-7 3-6-3zM4 6l6 2 7-3M10 8v9M4 10l6 2" fill="none" stroke="#858585"/><circle cx="16" cy="13" r="3" fill="#858585"/><path d="M14.500 15h3v3h-3z" fill="#858585"/>`)}</button>
                    <button class="rb r40 gap5" aria-label="Soft selection">${ic(22, 21, svg`<circle cx="11" cy="10" r="4.500" fill="#777" stroke="#858585" stroke-width="3"/>`)}</button>
                  </div>
                </div>
                <div class="col mid">
                  <button class="rb" aria-label="Previous modifier">${ic(22, 21, svg`<path d="M4 6h7M4 9h8M4 12h8M4 15h8" stroke="#454545"/><path d="M14 17V5M11 8l3.500-4L18 8" fill="none" stroke="#999" stroke-width="1.500"/>`)}</button>
                  <button class="rb" aria-label="Next modifier">${ic(22, 21, svg`<path d="M4 6h7M4 9h8M4 12h8M4 15h8" stroke="#454545"/><path d="M14.500 3v12M11 12l3.500 4 3.500-4" fill="none" stroke="#999" stroke-width="1.500"/>`)}</button>
                </div>
                <div class="col">
                  <button class="rb blue" aria-label="Show end result">${ic(22, 21, svg`<path d="M4 4v14h4M4 4h3" fill="none" stroke="#24344f"/><circle cx="9" cy="8" r="4" fill="#a5d8f5"/><path d="M7.500 11h3v5h-3z" fill="#cdeaf8"/><path d="M15.500 3.500h3v14h-3z" fill="#fff" stroke="#222"/>`)}</button>
                  <button class="rb" aria-label="Pin stack">${ic(22, 21, svg`<path d="M3 10h6M9 6v8M9 8h7v4H9M17 5v10" fill="none" stroke="#808080" stroke-width="1.500"/>`)}</button>
                  <button class="rb blue" aria-label="Collapse">${ic(22, 21, svg`<path d="M3.500 3.500h8v3h-1v11h-6v-11h-1z" fill="#a8dcf2" stroke="#1c2b45"/><path d="M15.500 18V5M12.500 8l3-4 3 4" fill="none" stroke="#fff" stroke-width="1.500"/>`)}</button>
                </div>
              </div>
              <button class="ptitle">Polygon Modeling ${ic(8, 5, svg`<path d="M0 0h8L4 4.500z" fill="#eee"/>`)}</button>
            </div>
          </div>
        </div>
      </section>

      <main class="main">
        <div class="views">
          ${views.map(
            (v) => html`<section class="view ${v.id}">
              <svg viewBox=${v.box} preserveAspectRatio="xMidYMid slice" aria-hidden="true">${defs}${scenes[v.id]}</svg>
              <div class="labels">${v.tags.map((t, i) => html`<button>[${i ? t : "+ "}]</button>`)}</div>
            </section>`
          )}
        </div>
        <aside class="cmd">
          <div class="hgrip"></div>
          <div class="ctabs">
            <button aria-label="Create">${ic(20, 20, svg`<path d="M10 2v16M2 10h16" stroke="#a8a8a8" stroke-width="2"/>`)}</button>
            <button class="act" aria-label="Modify">${ic(20, 20, svg`<path d="M3 6v8M17 6v8M6 3h8M6 17h8" stroke=${T}/><path d="M2.500 2.500h2v2h-2zM15.500 2.500h2v2h-2zM2.500 15.500h2v2h-2zM15.500 15.500h2v2h-2z" fill="none" stroke=${T}/><path d="M6 15q0-8 8-9" fill="none" stroke="#ddd" stroke-width="2.500"/>`)}</button>
            <button aria-label="Hierarchy">${ic(20, 20, svg`<path d="M4 3h12v5H4z" fill="#999"/><path d="M10 8v3M4.500 15v-4h11v4" fill="none" stroke="#3b8688" stroke-width="1.500"/><path d="M3 15h3v3H3zM14 15h3v3h-3z" fill="#3b8688"/>`)}</button>
            <button aria-label="Motion">${ic(20, 20, svg`<path d="M5 4q-5 6 0 12M8 4q-5 6 0 12" fill="none" stroke="#3b8688" stroke-width="1.500"/><circle cx="12" cy="10" r="6" fill="#999"/>`)}</button>
            <button aria-label="Display">${ic(20, 20, svg`<path d="M2 4h16v9H2z" fill="#999"/><path d="M6 16.500h8" stroke="#999" stroke-width="2"/>`)}</button>
            <button aria-label="Utilities">${ic(20, 20, svg`<path d="M8 8l9 9" stroke="#999" stroke-width="3.500"/><path d="M5 2q5 0 5 4 0 3-3 4-4 0-5-5l3 2 2-2z" fill="#999"/>`)}</button>
          </div>
          <div class="cbox">
            <div class="inner">
              <div class="name"><input aria-label="Object name" /><button class="swatch" aria-label="Object color"></button></div>
              ${this.drop("Modifier List", "Modifier List")}
              <div class="mods">${["Edit Poly", "TurboSmooth", "Symmetry", "Slice", "Lathe", "Extrude", "Shell", "Spherify"].map((m) => html`<button>${m}</button>`)}</div>
              <div class="stack"></div>
              <div class="stools">
                <button aria-label="Pin stack">${ic(20, 20, svg`<path d="M3 17l6-6M8 8l4 4 1-1 4-3-4-5-3 4z" fill="#5c5c5c" stroke="#222" stroke-width="1.200"/>`)}</button>
                <span class="sep"></span>
                <button class="on" aria-label="Show end result">${ic(20, 20, svg`<path d="M6.500 3.500h8v2h-1v12h-6v-12h-1z" fill="#5b6b84" stroke="#222c3a"/><path d="M9.500 7v9M11.500 7v9" stroke="#33425a"/>`)}</button>
                <span class="sep"></span>
                <button class="uniq" aria-label="Make unique">${ic(20, 20, svg`<circle cx="7" cy="6" r="3.500" fill="#555" stroke="#222"/><path d="M11 4h5q2 5-1 7M9 9q0 8 3 8" fill="none" stroke="#222" stroke-width="1.500"/><circle cx="14" cy="13" r="4" fill="#444" stroke="#222" stroke-width="1.200"/>`)}</button>
                <button class="trash" aria-label="Remove modifier">${ic(20, 20, svg`<path d="M5 5.500h11M8 5V3h5v2M6 7.500h9v10H6z" fill="none" stroke="#222" stroke-width="1.300"/><path d="M8.500 9v7M10.500 9v7M12.500 9v7" stroke="#222"/>`)}</button>
                <span class="sep"></span>
                <button class="conf" aria-label="Configure modifier sets">${ic(20, 20, svg`<path d="M4 3h13v14H4z" fill=${G}/><path d="M6 8h4v3H6zM6 13h4v3H6zM12 13h3v3h-3zM12 9h3" fill="none" stroke="#333" stroke-width="1.200"/><path d="M9 13l9-10" stroke="#333" stroke-width="4"/><path d="M10 12l8-9" stroke=${O} stroke-width="2.500"/>`)}</button>
              </div>
              <div class="split"><i></i><b></b><i></i></div>
              <div class="in2"><span class="sb"></span></div>
            </div>
            <span class="sb"></span>
          </div>
        </aside>
      </main>

      <footer class="foot">
        <div class="time">
          <span class="grip"></span>
          <div>
            <div class="slider"><button aria-label="Previous frame">&lt;</button><button class="thumb">0 / 100</button><button aria-label="Next frame">&gt;</button></div>
            <div class="trackrow">
              <button class="mini-curve" aria-label="Open mini curve editor">${ic(16, 12, svg`<path d="M2.500 1v11" stroke="#eee" stroke-width="3" stroke-dasharray="1 1"/><path d="M6 8q2-12 4.500-2t4.500-1" fill="none" stroke=${T} stroke-width="1.500"/>`)}</button>
              <div class="track">
                ${Array.from({ length: 101 }, (_, i) => html`<div class=${classMap({ frame: true, five: i % 5 === 0, now: i === 0 })}>${i % 5 === 0 ? html`<span>${i}</span>` : null}</div>`)}
              </div>
            </div>
          </div>
        </div>
        <div class="status">
          <div class="listen"><input class="pink" aria-label="Macro recorder" /><input class="mx" aria-label="MAXScript listener" value="MAXScript Mini Listener" /></div>
          <span class="vsep"></span>
          <div class="msg"><p>None Selected</p><p>Click and drag to select and move objects</p></div>
          <div class="coord">
            <div class="row">
              <button aria-label="Isolate selection">${ic(18, 18, svg`<path d="M5.500 5.500h7v7h-7zM1.500 5v-3.500H5M13 1.500h3.500V5M16.500 13v3.500H13M5 16.500H1.500V13" fill="none" stroke="#222"/><path d="M3.500 3.500h1v1h-1zM13.500 3.500h1v1h-1zM3.500 13.500h1v1h-1zM13.500 13.500h1v1h-1z" fill="none" stroke="#262626"/>`)}</button>
              <button aria-label="Lock selection">${ic(18, 18, svg`<path d="M5.500 8V5q0-3.500 3.500-3.500T12.500 5v3" fill="none" stroke="#222" stroke-width="1.800"/><rect x="3.500" y="7.500" width="11" height="9" rx="1" fill="#5a5a5a" stroke="#222"/><path d="M8 10h2v4H8z" fill="#111"/>`)}</button>
              <button aria-label="Absolute mode">${ic(18, 18, svg`<path d="M2 2h14v14H2z" fill="#333" stroke=${G} stroke-width="1.500"/><path d="M9 1v5M9 12v5M1 9h5M12 9h5M3 3l3 3M15 3l-3 3M3 15l3-3M15 15l-3-3" stroke=${G} stroke-width="1.500"/><circle cx="9" cy="9" r="3.500" fill="#333" stroke=${G} stroke-width="1.800"/>`)}</button>
              <label><span>X:</span><input value="2,667" /></label>
              <label><span>Y:</span><input value="-0,214" /></label>
              <label><span>Z:</span><input value="0,0" /></label>
              <span class="grid-size">Grid = 10,0</span>
            </div>
            <div class="row tag"><span class="sep"></span><button aria-label="Time tag">${ic(18, 18, svg`<path d="M9 2l6 3.500v7L9 16l-6-3.500v-7zM3 5.500L9 9l6-3.500M9 9v7" fill="none" stroke="#1f2e46" stroke-width="2.500"/><path d="M9 2l6 3.500v7L9 16l-6-3.500v-7zM3 5.500L9 9l6-3.500M9 9v7" fill="none" stroke="#e6e6e6"/>`)}</button><span>Add Time Tag</span></div>
          </div>
          <div class="play">
            <div class="row">
              <button aria-label="Go to start">${ic(20, 18, svg`<path d="M3 4v11" stroke=${G} stroke-width="2"/><path d="M10 4v11L5 9.500zM17 4v11l-6-5.500z" fill=${G}/>`)}</button><span class="sep"></span>
              <button aria-label="Previous frame">${ic(20, 18, svg`<path d="M9 4v11L2.500 9.500z" fill=${G}/><path d="M12 4v11M16 4v11" stroke=${G} stroke-width="2"/>`)}</button>
              <button aria-label="Play">${ic(20, 20, svg`<path d="M4 3l12 7-12 7z" fill=${G}/><path d="M20 15v4h-4z" fill="#eee"/>`)}</button>
              <button aria-label="Next frame">${ic(20, 18, svg`<path d="M11 4v11l6.500-5.500z" fill=${G}/><path d="M4 4v11M8 4v11" stroke=${G} stroke-width="2"/>`)}</button><span class="sep"></span>
              <button aria-label="Go to end">${ic(20, 18, svg`<path d="M17 4v11" stroke=${G} stroke-width="2"/><path d="M10 4v11l5-5.500zM3 4v11l6-5.500z" fill=${G}/>`)}</button>
            </div>
            <div class="row">
              <button aria-label="Key mode">${ic(20, 18, svg`<path d="M8 5v8L4 9zM12 5v8l4-4z" fill=${G}/>`)}</button><span class="sep"></span>
              <label class="spinbox"><input aria-label="Current frame" value="0" />${ic(6, 10, svg`<path d="M0 4h6L3 1zM0 6h6L3 9z" fill=${G}/>`)}</label><span class="sep"></span>
              <button aria-label="Time configuration">${ic(20, 18, svg`<circle cx="9" cy="7" r="5" fill=${G}/><path d="M9 3.500V7h3" fill="none" stroke="#333"/><circle cx="13" cy="12" r="5.500" fill="#444"/><circle cx="13" cy="12" r="2.700" fill="none" stroke=${O} stroke-width="2"/><circle cx="13" cy="12" r="4" fill="none" stroke=${O} stroke-width="1.400" stroke-dasharray="1.600 1.500"/>`)}</button>
            </div>
          </div>
          <div class="keys">
            <button class="bigkey" aria-label="Set keys">${ic(36, 36, svg`<path d="M17 5v24M5 17h24" stroke="#444" stroke-width="7"/><path d="M17 6v22M5 17h24" stroke=${G} stroke-width="5"/><g fill="none"><path d="M32 19l-11 10" stroke="#333" stroke-width="4.500"/><circle cx="21" cy="29" r="3" fill="#616161" stroke="#333" stroke-width="4"/><circle cx="21" cy="29" r="3" stroke=${T} stroke-width="2"/><path d="M23 27l9-8M29 22l3 3M26 24l2 2" stroke=${T} stroke-width="2"/></g>`)}</button>
            <div class="stackc"><button>Auto Key</button><button>Set Key</button></div>
            <div class="stackc">
              ${this.drop("Key set", "Selected")}
              <div class="row">
                <button class="bare" aria-label="Tangents">${ic(22, 20, svg`<path d="M4 18q4-6 2-13M16 18q-4-6-2-13" fill="none" stroke=${T} stroke-width="2"/><path d="M2 4h16" stroke=${G}/><circle cx="2" cy="4" r="1.500" fill=${G}/><circle cx="18" cy="4" r="1.500" fill=${G}/><path d="M8 2h4v4H8z" fill="#444" stroke=${G}/><path d="M21 15v4h-4z" fill="#eee"/>`)}</button>
                <button class="kf">Key Filters...</button>
              </div>
            </div>
          </div>
          <div class="nav">
            <button aria-label="Zoom">${ic(22, 22, svg`<circle cx="12.500" cy="8" r="4.500" fill="none" stroke=${G} stroke-width="2"/><path d="M9.500 11.500L4 17" stroke=${G} stroke-width="3"/>`)}</button>
            <button aria-label="Zoom all">${ic(22, 22, svg`<path d="M8 3h4v4H8zM13 3h5v4h-5zM13 8h5v4h-5z" fill=${T}/><circle cx="10.500" cy="10" r="3.500" fill="#444" stroke=${G} stroke-width="1.800"/><path d="M8 13l-4 4" stroke=${G} stroke-width="2.600"/>`)}</button>
            <button aria-label="Zoom extents">${ic(22, 22, svg`<path d="M4 7V3h3M15 3h3v4M4 13v4h3" fill="none" stroke=${G}/><path d="M11 4l6 2.500v6L11 16l-6-3.500v-6z" fill=${T}/><path d="M5 6.500L11 9l6-2.500M11 9v7" fill="none" stroke="#24686a"/><path d="M20 15v4h-4z" fill="#eee"/>`)}</button>
            <button aria-label="Zoom extents all">${ic(22, 22, svg`<path d="M11 5l3-2.500L17 5v7l-3 2.500-3-2.500z" fill=${T} stroke="#24686a"/><path d="M14 6v8" stroke="#24686a"/><path d="M3 11l3-2 3 2-3 2zM6 15l4-2 3 2-4 2zM7.500 7.500l2.500-1v3z" fill=${G}/><path d="M21 15v4h-4z" fill="#eee"/>`)}</button>
            <button aria-label="Field of view">${ic(22, 22, svg`<path d="M5 4l11 6.500L5 16M8 6q4 4 0 8" fill="none" stroke=${G} stroke-width="2"/><path d="M20 16v4h-4z" fill="#eee"/>`)}</button>
            <button aria-label="Pan">${ic(22, 22, svg`<path d="M6 12L4 9l1.500-1L8 10V4h1.800v5h.6V3h1.800v6h.6V4h1.800v6h.6V6H17v8q-1 4-4 4h-2q-3-1-5-6z" fill=${G}/><path d="M21 16v4h-4z" fill="#eee"/>`)}</button>
            <button aria-label="Orbit">${ic(22, 22, svg`<circle cx="10" cy="10" r="6" fill=${T}/><path d="M10 4v6H4A6 6 0 0 0 12 16q2-6-2-12z" fill=${G}/><path d="M18 4q1 3-5 7t-10 4" fill="none" stroke="#444" stroke-width="3.500"/><path d="M18 4q2 2-4 7T3 15" fill="none" stroke=${G} stroke-width="1.800"/><path d="M21 16v4h-4z" fill="#eee"/>`)}</button>
            <button aria-label="Maximize viewport">${ic(22, 22, svg`<path d="M4 4h14v14H4z" fill=${G}/><path d="M5.500 12.500h4v4h-4z" fill="none" stroke="#333"/><path d="M10 11.500l5-5M11 6h4.500v4.500" fill="none" stroke="#333" stroke-width="1.800"/>`)}</button>
          </div>
        </div>
      </footer>
    `;
  }
}
